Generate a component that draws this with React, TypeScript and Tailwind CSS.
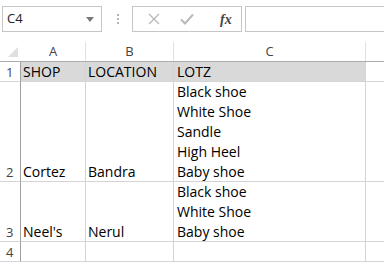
import React from 'react';

const cellFont = { fontFamily: '"Open Sans", "Noto Sans", sans-serif' };

interface Row {
  num: string;
  height: string;
  shop: string;
  location: string;
  lotz: string[];
  header?: boolean;
}

const rows: Row[] = [
  { num: '1', height: 'h-[20px]', shop: 'SHOP', location: 'LOCATION', lotz: ['LOTZ'], header: true },
  { num: '2', height: 'h-[100px]', shop: 'Cortez', location: 'Bandra', lotz: ['Black shoe', 'White Shoe', 'Sandle', 'High Heel', 'Baby shoe'] },
  { num: '3', height: 'h-[60px]', shop: "Neel's", location: 'Nerul', lotz: ['Black shoe', 'White Shoe', 'Baby shoe'] },
  { num: '4', height: 'h-[20px]', shop: '', location: '', lotz: [] },
];

function Toolbar() {
  return (
    <div className="flex items-center h-[42px] pb-[4px] pl-[2px]">
      {/* name box */}
      <div className="flex items-center justify-between w-[100px] h-[26px] border border-[#c6c6c6] px-[4px]">
        <span className="text-[13px] text-[#222]" style={{ fontFamily: '"Open Sans", sans-serif' }}>C4</span>
        <svg width="8" height="5" viewBox="0 0 8 5" className="mr-[3px]">
          <path d="M0 0 L8 0 L4 5 Z" fill="#7a7a7a" />
        </svg>
      </div>
      <div className="flex flex-col gap-[2px] ml-[15px] mr-[13px]">
        <span className="w-[2px] h-[2px] bg-[#b5b5b5]" />
        <span className="w-[2px] h-[2px] bg-[#b5b5b5]" />
        <span className="w-[2px] h-[2px] bg-[#b5b5b5]" />
      </div>
      {/* formula buttons */}
      <div className="flex items-center w-[110px] h-[26px] border border-[#c6c6c6]">
        <svg width="12" height="12" viewBox="0 0 12 12" className="ml-[15px]">
          <path d="M1 1 L11 11 M11 1 L1 11" stroke="#b9b9b9" strokeWidth="1.4" />
        </svg>
        <svg width="14" height="12" viewBox="0 0 14 12" className="ml-[20px]">
          <path d="M1 6.5 L5 10.5 L13 1.5" stroke="#b9b9b9" strokeWidth="2" fill="none" />
        </svg>
        <span
          className="ml-[26px] text-[14px] italic font-semibold text-[#444]"
          style={{ fontFamily: '"Liberation Serif", serif' }}
        >
          fx
        </span>
      </div>
      <div className="ml-[3px] flex-1 h-[26px] border border-[#c6c6c6] border-r-0" />
    </div>
  );
}

function ColHead({ label, className }: { label: string; className: string }) {
  return (
    <div className={`${className} flex items-center justify-center border-r border-[#e1e1e1] text-[13px] text-[#444]`}>
      {label}
    </div>
  );
}

function Line({ text }: { text: string }) {
  return <div className="h-[20px] leading-[22px] whitespace-nowrap">{text}</div>;
}

export default function App() {
  return (
    <div className="w-[384px] h-[264px] bg-white overflow-hidden" style={cellFont}>
      <Toolbar />
      {/* column headers */}
      <div className="flex h-[20px] border-b border-[#ababab]">
        <div className="w-[21px] relative">
          <svg width="10" height="10" viewBox="0 0 10 10" className="absolute left-[8px] top-[5px]">
            <path d="M10 0 L10 10 L0 10 Z" fill="#dfdfdf" />
          </svg>
        </div>
        <ColHead label="A" className="w-[65px]" />
        <ColHead label="B" className="w-[88px]" />
        <ColHead label="C" className="w-[192px]" />
        <div className="flex-1" />
      </div>
      {rows.map((r) => (
        <div key={r.num} className={`flex ${r.height} text-[14px] text-black`}>
          <div className="w-[21px] border-r border-[#9f9f9f] border-b border-b-[#d4d4d4] flex flex-col justify-end pl-[6px] text-[13px] text-[#444]">
            <Line text={r.num} />
          </div>
          <div className={`w-[65px] border-r border-b border-[#d4d4d4] flex flex-col justify-end pl-[2px] ${r.header ? 'bg-[#d9d9d9]' : ''}`}>
            {r.shop && <Line text={r.shop} />}
          </div>
          <div className={`w-[88px] border-r border-b border-[#d4d4d4] flex flex-col justify-end pl-[2px] ${r.header ? 'bg-[#d9d9d9]' : ''}`}>
            {r.location && <Line text={r.location} />}
          </div>
          <div className={`w-[192px] border-r border-b border-[#d4d4d4] flex flex-col justify-end pl-[3px] ${r.header ? 'bg-[#d9d9d9]' : ''}`}>
            {r.lotz.map((t) => (
              <Line key={t} text={t} />
            ))}
          </div>
          <div className="flex-1 border-b border-[#d4d4d4]" />
        </div>
      ))}
    </div>
  );
}
